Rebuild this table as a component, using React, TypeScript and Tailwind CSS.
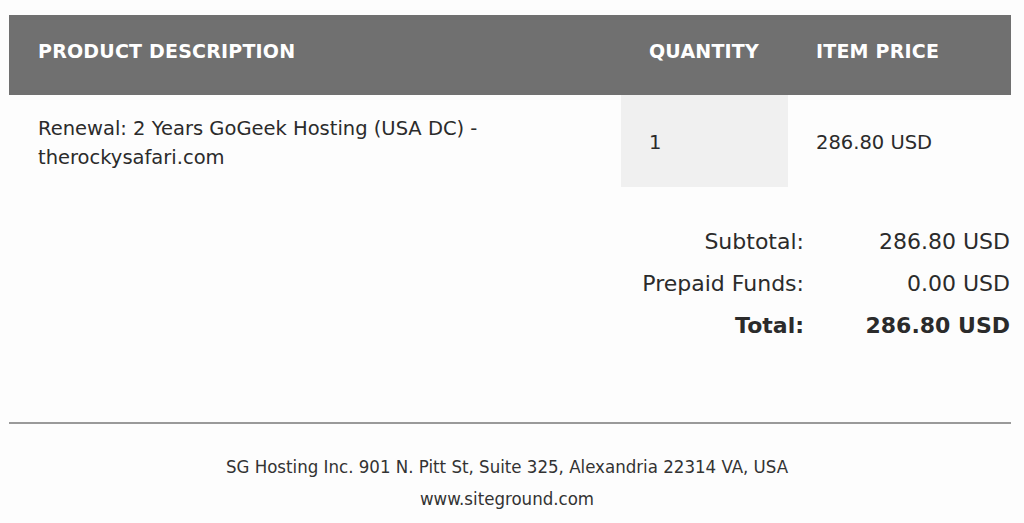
import React from 'react'

const font = { fontFamily: '"DejaVu Sans", "Liberation Sans", sans-serif' }

export default function App() {
  return (
    <div className="w-[1024px] h-[523px] bg-[#fdfdfd] text-[#2b2b2b] overflow-hidden" style={font}>
      <div className="pt-[15px] pl-[9px] pr-[13px]">
        <div className="flex h-[80px] items-center pb-[7px] bg-[#707070] text-white font-bold text-[19px] tracking-[0.2px]">
          <div className="flex-1 pl-[29px]">PRODUCT DESCRIPTION</div>
          <div className="w-[167px] pl-[28px]">QUANTITY</div>
          <div className="w-[223px] pl-[28px]">ITEM PRICE</div>
        </div>
        <div className="flex h-[92px] text-[19.5px] leading-[29px]">
          <div className="flex-1 pl-[29px] flex items-center pt-[3px]">
            <div>
              Renewal: 2 Years GoGeek Hosting (USA DC) -<br />therockysafari.com
            </div>
          </div>
          <div className="w-[167px] pl-[28px] bg-[#f0f0f0] flex items-center pt-[3px]">1</div>
          <div className="w-[223px] pl-[28px] flex items-center pt-[3px]">286.80 USD</div>
        </div>
        <div className="mt-[40px] flex flex-col gap-[12px] text-[22px] leading-[30px]">
          <div className="flex justify-end">
            <span className="text-right">Subtotal:</span>
            <span className="w-[207px] text-right pr-[1px]">286.80 USD</span>
          </div>
          <div className="flex justify-end">
            <span className="text-right">Prepaid Funds:</span>
            <span className="w-[207px] text-right pr-[1px]">0.00 USD</span>
          </div>
          <div className="flex justify-end font-bold">
            <span className="text-right">Total:</span>
            <span className="w-[207px] text-right pr-[1px]">286.80 USD</span>
          </div>
        </div>
        <div className="mt-[81px] h-[2px] bg-[#9a9a9a]" />
        <div className="pt-[31px] pr-[6px] flex flex-col items-center gap-[8px] text-[18.5px] leading-[24px] text-[#333]" style={{ fontFamily: '"DejaVu Sans Condensed", "DejaVu Sans", sans-serif' }}>
          <div>SG Hosting Inc. 901 N. Pitt St, Suite 325, Alexandria 22314 VA, USA</div>
          <div>www.siteground.com</div>
        </div>
      </div>
    </div>
  )
}
